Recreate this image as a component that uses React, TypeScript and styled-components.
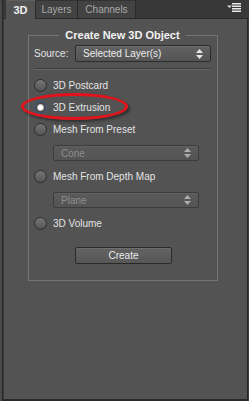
import React from 'react';
import styled, { createGlobalStyle } from 'styled-components';

const GlobalStyle = createGlobalStyle`
    html, body {
        margin: 0;
        padding: 0;
        background: #3c3c3c;
    }
    * {
        box-sizing: border-box;
    }
`;

const App: React.FC = () => {
    return (
        <>
            <GlobalStyle />
            <Window>
                <TabBar>
                    <Tab active>3D</Tab>
                    <Tab>Layers</Tab>
                    <Tab>Channels</Tab>
                    <MenuButton>
                        <svg width="14" height="9" viewBox="0 0 14 9">
                            <path d="M0 2.5h5L2.5 5z" fill="#d8d8d8" />
                            <rect x="5" y="0" width="9" height="1.5" fill="#e8e8e8" />
                            <rect x="5" y="2.5" width="9" height="1.5" fill="#e8e8e8" />
                            <rect x="5" y="5" width="9" height="1.5" fill="#e8e8e8" />
                            <rect x="5" y="7.5" width="9" height="1.5" fill="#e8e8e8" />
                        </svg>
                    </MenuButton>
                </TabBar>
                <Panel>
                    <Group>
                        <Legend>Create New 3D Object</Legend>
                        <SourceRow>
                            <Label>Source:</Label>
                            <Select width={136}>
                                <span>Selected Layer(s)</span>
                                <Arrows />
                            </Select>
                        </SourceRow>
                        <Separator />
                        <RadioRow>
                            <Radio />
                            <Label>3D Postcard</Label>
                        </RadioRow>
                        <RadioRow>
                            <Radio checked />
                            <Label>3D Extrusion</Label>
                            <Highlight />
                        </RadioRow>
                        <RadioRow>
                            <Radio />
                            <Label>Mesh From Preset</Label>
                        </RadioRow>
                        <SubRow>
                            <Select width={146} disabled>
                                <span>Cone</span>
                                <Arrows />
                            </Select>
                        </SubRow>
                        <RadioRow>
                            <Radio />
                            <Label>Mesh From Depth Map</Label>
                        </RadioRow>
                        <SubRow>
                            <Select width={146} disabled>
                                <span>Plane</span>
                                <Arrows />
                            </Select>
                        </SubRow>
                        <RadioRow>
                            <Radio />
                            <Label>3D Volume</Label>
                        </RadioRow>
                        <ButtonRow>
                            <Button>Create</Button>
                        </ButtonRow>
                    </Group>
                </Panel>
            </Window>
        </>
    );
};

const Arrows: React.FC = () => (
    <svg width="7" height="10" viewBox="0 0 7 10">
        <path d="M3.5 0L7 4H0z" fill="#e6e6e6" />
        <path d="M3.5 10L7 6H0z" fill="#e6e6e6" />
    </svg>
);

export default App;

const Window = styled.div`
    width: 249px;
    height: 401px;
    display: flex;
    flex-direction: column;
    background: #3c3c3c;
    border-left: 2px solid #4a4a4a;
    font-family: 'Liberation Sans', Arial, sans-serif;
    font-size: 10px;
`;

const TabBar = styled.div`
    height: 19px;
    display: flex;
    align-items: stretch;
    background: #383838;
    border-left: 1px solid #262626;
    border-bottom: 1px solid #2a2a2a;
    padding-left: 3px;
    padding-right: 8px;
`;

const Tab = styled.div<{ active?: boolean }>`
    display: flex;
    align-items: center;
    justify-content: center;
    padding: 0 7px;
    margin-bottom: ${(p) => (p.active ? '-1px' : '0')};
    background: ${(p) => (p.active ? '#535353' : '#424242')};
    color: ${(p) => (p.active ? '#f0f0f0' : '#a8a8a8')};
    font-weight: ${(p) => (p.active ? 'bold' : 'normal')};
    font-size: ${(p) => (p.active ? '11px' : '10px')};
    border-right: 1px solid #2a2a2a;
    border-top: 1px solid ${(p) => (p.active ? '#5e5e5e' : '#333')};
    &:first-child {
        width: 30px;
    }
    &:nth-child(2) {
        width: 42px;
    }
    &:nth-child(3) {
        width: 58px;
    }
`;

const MenuButton = styled.div`
    margin-left: auto;
    display: flex;
    align-items: center;
    padding-bottom: 3px;
`;

const Panel = styled.div`
    flex: 1;
    background: #535353;
    border-left: 1px solid #262626;
    border-right: 1px solid #262626;
    border-bottom: 2px solid #2a2a2a;
    box-shadow: inset 1px 0 0 #3a3a3a;
    margin-right: 1px;
    padding: 10px 25px 0 25px;
`;

const Group = styled.fieldset`
    position: relative;
    width: 190px;
    margin: 0;
    padding: 3px 6px 16px 5px;
    border: 1px solid #757575;
    display: flex;
    flex-direction: column;
`;

const Legend = styled.legend`
    margin: 0 auto;
    padding: 0 6px;
    color: #f2f2f2;
    font-weight: bold;
    font-size: 11px;
    line-height: 13px;
`;

const SourceRow = styled.div`
    display: flex;
    align-items: center;
    justify-content: space-between;
    height: 17px;
`;

const Label = styled.span`
    color: #e4e4e4;
    font-size: 10px;
    white-space: nowrap;
`;

const Select = styled.div<{ width: number; disabled?: boolean }>`
    width: ${(p) => p.width}px;
    height: ${(p) => (p.disabled ? '16px' : '17px')};
    display: flex;
    align-items: center;
    justify-content: space-between;
    padding: 0 7px 0 7px;
    border: 1px solid ${(p) => (p.disabled ? '#3c3c3c' : '#2c2c2c')};
    border-radius: 2px;
    background: ${(p) =>
        p.disabled
            ? 'linear-gradient(#5a5a5a, #545454)'
            : 'linear-gradient(#626262, #545454)'};
    box-shadow: inset 0 1px 0 ${(p) => (p.disabled ? '#606060' : '#6c6c6c')};
    color: ${(p) => (p.disabled ? '#8e8e8e' : '#ececec')};
    span {
        font-size: 10px;
    }
    svg {
        opacity: ${(p) => (p.disabled ? 0.6 : 1)};
    }
`;

const Separator = styled.div`
    height: 2px;
    margin: 6px 0 4px 0;
    border-top: 1px solid #3c3c3c;
    border-bottom: 1px solid #666;
`;

const RadioRow = styled.div`
    position: relative;
    display: flex;
    align-items: center;
    gap: 6px;
    height: 22px;
`;

const Radio = styled.span<{ checked?: boolean }>`
    width: 13px;
    height: 13px;
    border-radius: 50%;
    border: 1px solid ${(p) => (p.checked ? '#3c5a8a' : '#2c2c2c')};
    background: ${(p) =>
        p.checked
            ? 'radial-gradient(circle, #ffffff 0 2px, #b8b8b8 3px, #4a4a4a 4px)'
            : 'linear-gradient(#767676, #545454)'};
    flex-shrink: 0;
`;

const Highlight = styled.span`
    position: absolute;
    left: -13px;
    top: -3px;
    width: 107px;
    height: 27px;
    border: 3px solid #e3121b;
    border-radius: 50%;
    box-shadow: 2px 2px 3px rgba(0, 0, 0, 0.45);
    pointer-events: none;
`;

const SubRow = styled.div`
    display: flex;
    padding-left: 19px;
    margin: 5px 0 4px 0;
`;

const ButtonRow = styled.div`
    display: flex;
    justify-content: center;
    margin-top: 13px;
    padding-left: 2px;
`;

const Button = styled.div`
    width: 97px;
    height: 17px;
    display: flex;
    align-items: center;
    justify-content: center;
    border: 1px solid #2a2a2a;
    border-radius: 2px;
    background: linear-gradient(#626262, #575757);
    box-shadow: inset 0 1px 0 #6e6e6e;
    color: #ececec;
    font-size: 10px;
`;
